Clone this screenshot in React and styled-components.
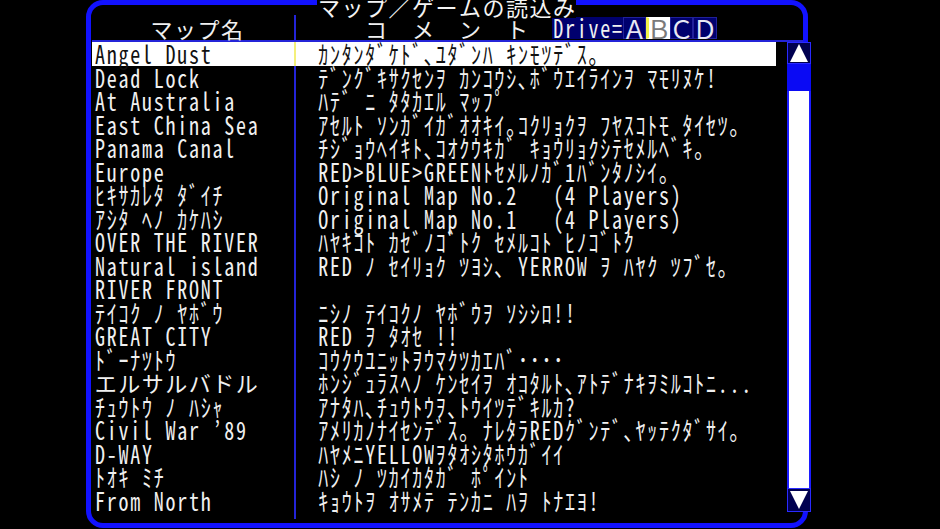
import React from 'react';
import styled, { createGlobalStyle } from 'styled-components';

// Text grid: every half-width character takes one 11.75px cell, full-width ones take two.
const CELL = 11.75;
const ROW = 23.5;

const HALF_FONT = '"Noto Sans Mono CJK JP", "Liberation Mono", "DejaVu Sans Mono", "Noto Sans CJK JP", monospace';
const WIDE_FONT = '"Noto Sans CJK JP", sans-serif';

const GlobalStyle = createGlobalStyle`
  html, body {
    margin: 0;
    padding: 0;
    background: #000;
    overflow: hidden;
  }
  body {
    font-family: ${HALF_FONT};
    color: #f0f0f0;
  }
`;

const Screen = styled.div`
  width: 940px;
  height: 529px;
  background: #000;
  padding-left: 86px;
  box-sizing: border-box;
`;

const Frame = styled.div`
  position: relative;
  box-sizing: border-box;
  width: 722px;
  height: 528px;
  border: 5px solid #1212ff;
  border-radius: 17px;
  padding: 10px 0 0 1px;
  display: flex;
  flex-direction: column;
`;

/* Window caption sits across the top edge of the frame (column 19 of the text grid) */
const Title = styled.div`
  position: absolute;
  left: 226.25px;
  top: -10.5px;
  display: flex;
  background: #000;
  color: #f4f4f4;
`;

const Glyph = styled.span`
  display: inline-block;
  flex: none;
  width: ${p => (p.$wide ? CELL * 2 : CELL)}px;
  height: ${ROW}px;
  line-height: ${ROW}px;
  text-align: center;
  white-space: pre;
  font-family: ${p => (p.$wide ? WIDE_FONT : HALF_FONT)};
  font-size: ${p => (p.$wide ? 22 : 20)}px;
  transform: ${p => (p.$wide ? 'none' : 'scaleY(1.25)')};
`;

const Header = styled.div`
  flex: none;
  height: 25px;
  display: grid;
  grid-template-columns: ${CELL * 17 + 2}px 1fr;
  border-bottom: 2px solid #2424d8;
`;

const HeadName = styled.div`
  display: flex;
  align-items: flex-end;
  padding-left: ${CELL * 5 - 1}px;
`;

const HeadComment = styled.div`
  display: flex;
  align-items: flex-end;
  border-left: 2px solid #2424d8;
  padding-left: ${CELL * 6 - 2}px;
`;

const DriveBox = styled.div`
  display: flex;
  align-items: center;
  height: 22px;
  margin-bottom: 1px;
  background: #00006e;
`;

const DriveLetter = styled.span`
  display: flex;
  align-items: center;
  justify-content: center;
  box-sizing: border-box;
  width: ${CELL * 2}px;
  height: 22px;
  font-family: ${WIDE_FONT};
  font-size: 25px;
  line-height: 22px;
  border: 1px solid ${p => (p.$active ? '#ffffff' : '#20209a')};
  border-left: ${p => (p.$active ? '3px solid #f2f24a' : '1px solid #20209a')};
  background: ${p => (p.$active ? '#ffffff' : 'transparent')};
  color: ${p => (p.$active ? '#7a7a7a' : '#e8e8f4')};
`;

const ListArea = styled.div`
  flex: 1;
  display: flex;
  min-height: 0;
`;

const Rows = styled.div`
  flex: none;
  width: ${CELL * 58 + 2}px;
  display: flex;
  flex-direction: column;
`;

const Row = styled.div`
  flex: none;
  height: ${ROW}px;
  display: grid;
  grid-template-columns: ${CELL * 17 + 2}px 1fr;
  background: ${p => (p.$selected ? '#ffffff' : 'transparent')};
  color: ${p => (p.$selected ? '#111' : '#f0f0f0')};
`;

const NameCell = styled.div`
  display: flex;
  align-items: center;
  padding-left: 2px;
`;

const CommentCell = styled.div`
  display: flex;
  align-items: center;
  border-left: 2px solid ${p => (p.$selected ? '#f4f07a' : '#2424d8')};
  padding-left: ${CELL * 2 - 2}px;
`;

const Filler = styled.div`
  flex: 1;
  display: grid;
  grid-template-columns: ${CELL * 17 + 2}px 1fr;
`;

const FillerLine = styled.div`
  grid-column: 2;
  border-left: 2px solid #2424d8;
  margin-bottom: 4px;
`;

const Scrollbar = styled.div`
  flex: none;
  width: ${CELL * 2}px;
  margin-left: ${CELL}px;
  height: ${ROW * 20}px;
  display: flex;
  flex-direction: column;
`;

const ArrowButton = styled.div`
  flex: none;
  box-sizing: border-box;
  height: ${p => p.$h}px;
  background: #000050;
  border: 1px solid #2a2aff;
  display: flex;
  align-items: center;
  justify-content: center;
`;

const Thumb = styled.div`
  flex: none;
  height: 27px;
  background: #0a0af4;
`;

const Track = styled.div`
  flex: 1;
  background: #ffffff;
  border-left: 2px solid #1c1cff;
  border-right: 2px solid #1c1cff;
`;

const isWide = ch => {
  const c = ch.codePointAt(0);
  return (
    (c >= 0x3000 && c <= 0x30ff) ||
    (c >= 0x4e00 && c <= 0x9fff) ||
    (c >= 0xff01 && c <= 0xff60) ||
    (c >= 0xffe0 && c <= 0xffe6)
  );
};

const Text = ({ children }) =>
  Array.from(children).map((ch, i) => (
    <Glyph key={i} $wide={isWide(ch)}>
      {ch}
    </Glyph>
  ));

const maps = [
  ['Angel Dust', 'ｶﾝﾀﾝﾀﾞｹﾄﾞ､ﾕﾀﾞﾝﾊ ｷﾝﾓﾂﾃﾞｽ｡'],
  ['Dead Lock', 'ﾃﾞﾝｸﾞｷｻｸｾﾝｦ ｶﾝｺｳｼ､ﾎﾞｳｴｲﾗｲﾝｦ ﾏﾓﾘﾇｹ!'],
  ['At Australia', 'ﾊﾃﾞ ﾆ ﾀﾀｶｴﾙ ﾏｯﾌﾟ'],
  ['East China Sea', 'ｱｾﾙﾄ ｿﾝｶﾞｲｶﾞｵｵｷｲ｡ｺｸﾘｮｸｦ ﾌﾔｽｺﾄﾓ ﾀｲｾﾂ｡'],
  ['Panama Canal', 'ﾁｼﾞｮｳﾍｲｷﾄ､ｺｵｸｳｷｶﾞ ｷｮｳﾘｮｸｼﾃｾﾒﾙﾍﾞｷ｡'],
  ['Europe', 'RED>BLUE>GREENﾄｾﾒﾙﾉｶﾞ1ﾊﾞﾝﾀﾉｼｲ｡'],
  ['ﾋｷｻｶﾚﾀ ﾀﾞｲﾁ', 'Original Map No.2   (4 Players)'],
  ['ｱｼﾀ ﾍﾉ ｶｹﾊｼ', 'Original Map No.1   (4 Players)'],
  ['OVER THE RIVER', 'ﾊﾔｷｺﾄ ｶｾﾞﾉｺﾞﾄｸ ｾﾒﾙｺﾄ ﾋﾉｺﾞﾄｸ'],
  ['Natural island', 'RED ﾉ ｾｲﾘｮｸ ﾂﾖｼ､ YERROW ｦ ﾊﾔｸ ﾂﾌﾞｾ｡'],
  ['RIVER FRONT', ''],
  ['ﾃｲｺｸ ﾉ ﾔﾎﾞｳ', 'ﾆｼﾉ ﾃｲｺｸﾉ ﾔﾎﾞｳｦ ｿｼｼﾛ!!'],
  ['GREAT CITY', 'RED ｦ ﾀｵｾ !!'],
  ['ﾄﾞｰﾅﾂﾄｳ', 'ｺｳｸｳﾕﾆｯﾄｦｳﾏｸﾂｶｴﾊﾞ････'],
  ['エルサルバドル', 'ﾎﾝｼﾞｭﾗｽﾍﾉ ｹﾝｾｲｦ ｵｺﾀﾙﾄ､ｱﾄﾃﾞﾅｷｦﾐﾙｺﾄﾆ...'],
  ['ﾁｭｳﾄｳ ﾉ ﾊｼｬ', 'ｱﾅﾀﾊ､ﾁｭｳﾄｳｦ､ﾄｳｲﾂﾃﾞｷﾙｶ?'],
  ['Civil War ’89', 'ｱﾒﾘｶﾉﾅｲｾﾝﾃﾞｽ｡ ﾅﾚﾀﾗREDｸﾞﾝﾃﾞ､ﾔｯﾃｸﾀﾞｻｲ｡'],
  ['D-WAY', 'ﾊﾔﾒﾆYELLOWｦﾀｵｼﾀﾎｳｶﾞｲｲ'],
  ['ﾄｵｷ ﾐﾁ', 'ﾊｼ ﾉ ﾂｶｲｶﾀｶﾞ ﾎﾟｲﾝﾄ'],
  ['From North', 'ｷｮｳﾄｦ ｵｻﾒﾃ ﾃﾝｶﾆ ﾊｦ ﾄﾅｴﾖ!'],
];

const drives = ['Ａ', 'Ｂ', 'Ｃ', 'Ｄ'];
const currentDrive = 1;
const selected = 0;

const UpArrow = () => (
  <svg width="18" height="18" viewBox="0 0 18 18">
    <polygon points="9,0 18,18 0,18" fill="#ffffff" />
  </svg>
);

const DownArrow = () => (
  <svg width="18" height="18" viewBox="0 0 18 18">
    <polygon points="0,0 18,0 9,18" fill="#ffffff" />
  </svg>
);

export default function App() {
  return (
    <>
      <GlobalStyle />
      <Screen>
        <Frame>
          <Title>
            <Text>マップ／ゲームの読込み</Text>
          </Title>
          <Header>
            <HeadName>
              <Text>マップ名</Text>
            </HeadName>
            <HeadComment>
              <Text>コ　メ　ン　ト　</Text>
              <DriveBox>
                <Text>Drive=</Text>
                {drives.map((d, i) => (
                  <DriveLetter key={d} $active={i === currentDrive}>
                    {d}
                  </DriveLetter>
                ))}
              </DriveBox>
            </HeadComment>
          </Header>
          <ListArea>
            <Rows>
              {maps.map(([name, comment], i) => (
                <Row key={name} $selected={i === selected}>
                  <NameCell>
                    <Text>{name}</Text>
                  </NameCell>
                  <CommentCell $selected={i === selected}>
                    <Text>{comment}</Text>
                  </CommentCell>
                </Row>
              ))}
              <Filler>
                <FillerLine />
              </Filler>
            </Rows>
            <Scrollbar>
              <ArrowButton $h={21.5}>
                <UpArrow />
              </ArrowButton>
              <Thumb />
              <Track />
              <ArrowButton $h={24}>
                <DownArrow />
              </ArrowButton>
            </Scrollbar>
          </ListArea>
        </Frame>
      </Screen>
    </>
  );
}
